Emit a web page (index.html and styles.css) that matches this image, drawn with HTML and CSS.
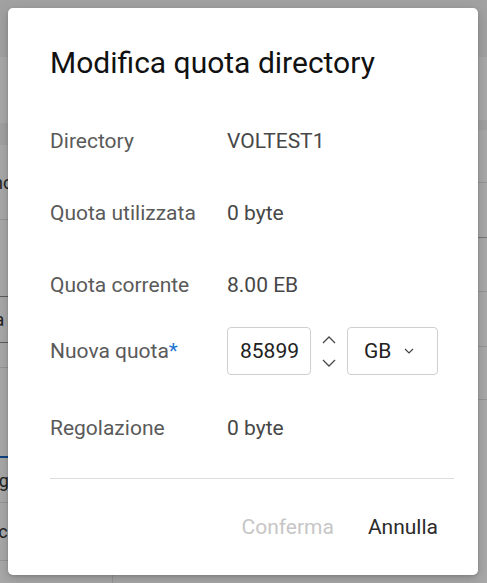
FILE: index.html
```html
<!DOCTYPE html>
<html lang="it">
<head>
<meta charset="utf-8">
<title>Modifica quota directory</title>
<link rel="stylesheet" href="styles.css">
</head>
<body>
<div class="page">
  <div class="topbar"></div>
  <div class="content">
    <div class="side">
      <div class="s-gap1"></div>
      <div class="s-band"></div>
      <div class="s-row s-r1"><span class="frag">Sinc</span></div>
      <div class="s-row s-r2 dark"></div>
      <div class="s-row s-r3 dark"><span class="frag">Sta</span></div>
      <div class="s-row s-r4"></div>
      <div class="s-row s-r5 blue"></div>
      <div class="s-row s-r6"><span class="frag">Reg</span></div>
      <div class="s-row s-r7"><span class="frag">Sec</span></div>
    </div>
    <div class="main">
      <div class="m-gap1"></div>
      <div class="m-band"></div>
      <div class="m-row m-r1"></div>
      <div class="m-row m-r2 dark"></div>
      <div class="m-row m-r3"></div>
      <div class="m-row m-r4"></div>
      <div class="m-row m-r5"></div>
    </div>
  </div>
  <div class="scrim"></div>
</div>

<div class="dialog" role="dialog" aria-labelledby="dlg-title">
  <h1 class="title" id="dlg-title">Modifica quota directory</h1>
  <div class="fields">
    <div class="row r1">
      <span class="label">Directory</span>
      <span class="value">VOLTEST1</span>
    </div>
    <div class="row r2">
      <span class="label">Quota utilizzata</span>
      <span class="value">0 byte</span>
    </div>
    <div class="row r3">
      <span class="label">Quota corrente</span>
      <span class="value">8.00 EB</span>
    </div>
    <div class="row r4">
      <span class="label">Nuova quota<span class="req">*</span></span>
      <div class="quota-ctrl">
        <div class="num-input">85899</div>
        <div class="spinner">
          <svg class="spin-up" width="14" height="8" viewBox="0 0 14 8"><path d="M1 7 L7 1 L13 7" fill="none" stroke="#4a4a4a" stroke-width="1.3"/></svg>
          <svg class="spin-down" width="14" height="8" viewBox="0 0 14 8"><path d="M1 1 L7 7 L13 1" fill="none" stroke="#4a4a4a" stroke-width="1.3"/></svg>
        </div>
        <div class="unit-select">
          <span class="unit">GB</span>
          <svg class="chev" width="10" height="6" viewBox="0 0 10 6"><path d="M1 1 L5 5 L9 1" fill="none" stroke="#444" stroke-width="1.2"/></svg>
        </div>
      </div>
    </div>
    <div class="row r5">
      <span class="label">Regolazione</span>
      <span class="value">0 byte</span>
    </div>
  </div>
  <div class="divider"></div>
  <div class="actions">
    <button class="btn btn-disabled" type="button" disabled>Conferma</button>
    <button class="btn" type="button">Annulla</button>
  </div>
</div>
</body>
</html>
```

FILE: styles.css
```css
html, body {
  margin: 0;
  padding: 0;
}
body {
  width: 487px;
  height: 583px;
  overflow: hidden;
  position: relative;
  font-family: Roboto, "Noto Sans", "Liberation Sans", sans-serif;
  background: #ffffff;
}

/* ---------- underlying page ---------- */
.page {
  position: relative;
  width: 487px;
  height: 583px;
  display: flex;
  flex-direction: column;
}
.topbar {
  height: 57px;
  background: #f4f4f4;
  flex: none;
}
.content {
  flex: 1;
  display: flex;
}
.side {
  width: 112px;
  border-right: 1px solid #e6e6e6;
  display: flex;
  flex-direction: column;
}
.main {
  flex: 1;
  display: flex;
  flex-direction: column;
}
.s-gap1 { height: 66px; }
.s-band { height: 22px; background: #f4f4f4; }
.s-row {
  border-bottom: 1px solid #e2e2e2;
  font-size: 18px;
  color: #333;
  display: flex;
  align-items: center;
  overflow: hidden;
  white-space: nowrap;
}
.s-row.dark { border-bottom-color: #8a8a8a; }
.s-row.blue { border-bottom: 2px solid #1565c0; }
.s-r1 { height: 74px; }
.s-r2 { height: 76px; }
.s-r3 { height: 45px; }
.s-r4 { height: 24px; }
.s-r5 { height: 88px; }
.s-r6 { height: 44px; }
.s-r7 { height: 57px; }
.frag { margin-left: -22px; }

.m-gap1 { height: 63px; }
.m-band { height: 10px; background: #f4f4f4; }
.m-row { border-bottom: 1px solid #e2e2e2; }
.m-row.dark { border-bottom-color: #b5b5b5; }
.m-r1 { height: 52px; }
.m-r2 { height: 54px; }
.m-r3 { height: 53px; }
.m-r4 { height: 54px; }
.m-r5 { height: 52px; }

.scrim {
  position: absolute;
  inset: 0;
  background: rgba(0, 0, 0, 0.34);
}

/* ---------- dialog ---------- */
.dialog {
  position: absolute;
  left: 8px;
  top: 8px;
  width: 470px;
  height: 567px;
  box-sizing: border-box;
  padding: 37px 24px 24px 42px;
  background: #ffffff;
  border-radius: 5px;
  box-shadow: 0 4px 12px rgba(0, 0, 0, 0.18), 0 1px 3px rgba(0, 0, 0, 0.12);
  display: flex;
  flex-direction: column;
}
.title {
  margin: 0;
  font-size: 30px;
  line-height: 36px;
  font-weight: 400;
  color: #111111;
}
.fields {
  margin-top: 48px;
  display: flex;
  flex-direction: column;
}
.row {
  display: flex;
  align-items: center;
  font-size: 21px;
  line-height: 24px;
}
.r2, .r3 { margin-top: 48px; }
.r4 { margin-top: 30px; height: 48px; }
.r5 { margin-top: 41px; }
.label {
  width: 177px;
  flex: none;
  color: #5a5a5a;
}
.value {
  color: #474747;
}
.req {
  color: #1f76d2;
}

.quota-ctrl {
  display: flex;
  align-items: center;
  height: 48px;
}
.num-input {
  width: 84px;
  height: 48px;
  box-sizing: border-box;
  border: 1px solid #cfcfcf;
  border-radius: 4px;
  padding-left: 12px;
  display: flex;
  align-items: center;
  color: #222;
  font-size: 21px;
  overflow: hidden;
}
.spinner {
  width: 36px;
  height: 48px;
  display: flex;
  flex-direction: column;
  align-items: center;
  justify-content: center;
  gap: 15px;
}
.spinner svg { display: block; }
.unit-select {
  width: 91px;
  height: 48px;
  box-sizing: border-box;
  border: 1px solid #cfcfcf;
  border-radius: 4px;
  padding-left: 16px;
  display: flex;
  align-items: center;
  color: #222;
  font-size: 21px;
}
.chev {
  margin-left: 13px;
  display: block;
}

.divider {
  margin-top: 38px;
  height: 1px;
  background: #dedede;
}
.actions {
  margin-top: 24px;
  display: flex;
  justify-content: flex-end;
  gap: 2px;
}
.btn {
  height: 48px;
  padding: 0 16px;
  border: none;
  background: transparent;
  font-family: Roboto, "Noto Sans", "Liberation Sans", sans-serif;
  font-size: 21px;
  color: #2b2b2b;
  cursor: pointer;
}
.btn-disabled {
  color: #c6c6c6;
  cursor: default;
}
```
